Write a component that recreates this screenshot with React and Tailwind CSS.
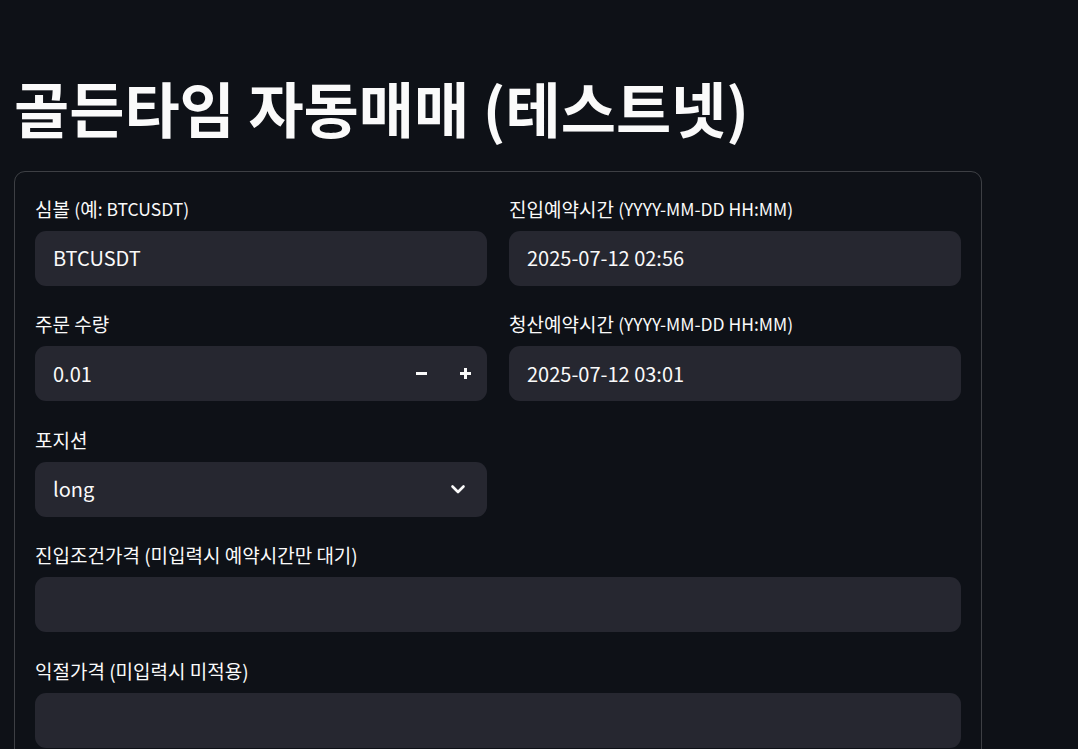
import React from "react";

// small icons
function Minus() {
  return (
    <svg width="13" height="13" viewBox="0 0 13 13">
      <path d="M1 6.5h11" stroke="#fafafa" strokeWidth="3" />
    </svg>
  );
}

function Plus() {
  return (
    <svg width="13" height="13" viewBox="0 0 13 13">
      <path d="M1 6.5h11M6.5 1v11" stroke="#fafafa" strokeWidth="3" />
    </svg>
  );
}

function Chevron() {
  return (
    <svg width="16" height="16" viewBox="0 0 16 16" fill="none">
      <path
        d="M2.5 5.5L8 11l5.5-5.5"
        stroke="#fafafa"
        strokeWidth="2.6"
        strokeLinecap="round"
        strokeLinejoin="round"
      />
    </svg>
  );
}

function Label({ children }) {
  return (
    <div className="h-[33px] mb-[5.5px] flex items-center text-[19px] leading-[26px] whitespace-pre">
      {children}
    </div>
  );
}

function Field({ label, value, right }) {
  return (
    <div>
      <Label>{label}</Label>
      <div className="h-[55px] rounded-[11px] bg-[#262730] flex items-center pl-[18px] text-[20px]">
        <span className="flex-1">{value}</span>
        {right}
      </div>
    </div>
  );
}

// latin parts of labels run a little narrower
function Lat({ children }) {
  return <span className="text-[17.5px]">{children}</span>;
}

export default function App() {
  return (
    <div className="min-h-screen bg-[#0e1117] text-[#fafafa] font-['Noto_Sans_CJK_KR',sans-serif] px-[14px] pb-10">
      <h1 className="pt-[67px] text-[60px] font-bold leading-[80px]">
        골든타임 자동매매 (테스트넷)
      </h1>
      <div className="mt-[24px] w-[968px] border border-[rgba(250,250,250,0.2)] rounded-[11px] px-[20px] pt-[20px] pb-[21px]">
        <div className="flex flex-col gap-[22px]">
          <div className="grid grid-cols-2 gap-x-[22px]">
            <div className="flex flex-col gap-[22px]">
              <Field
                label={
                  <>
                    심볼 <Lat>(</Lat>예<Lat>: BTCUSDT)</Lat>
                  </>
                }
                value="BTCUSDT"
              />
              <Field
                label="주문 수량"
                value="0.01"
                right={
                  <div className="flex h-full">
                    <div className="w-[44px] flex items-center justify-center">
                      <Minus />
                    </div>
                    <div className="w-[44px] flex items-center justify-center">
                      <Plus />
                    </div>
                  </div>
                }
              />
              <Field
                label="포지션"
                value="long"
                right={
                  <div className="w-[58px] flex items-center justify-center">
                    <Chevron />
                  </div>
                }
              />
            </div>
            <div className="flex flex-col gap-[22px]">
              <Field
                label={
                  <>
                    진입예약시간 <Lat>(YYYY-MM-DD HH:MM)</Lat>
                  </>
                }
                value="2025-07-12 02:56"
              />
              <Field
                label={
                  <>
                    청산예약시간 <Lat>(YYYY-MM-DD HH:MM)</Lat>
                  </>
                }
                value="2025-07-12 03:01"
              />
            </div>
          </div>
          <Field label="진입조건가격 (미입력시 예약시간만 대기)" value="" />
          <Field label="익절가격 (미입력시 미적용)" value="" />
        </div>
      </div>
    </div>
  );
}
